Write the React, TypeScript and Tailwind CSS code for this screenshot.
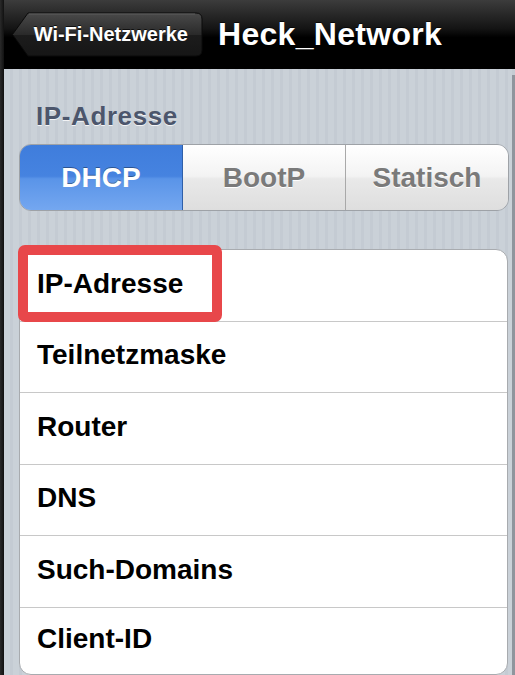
import React from "react";

const rows = ["IP-Adresse", "Teilnetzmaske", "Router", "DNS", "Such-Domains", "Client-ID"];

const segments = ["DHCP", "BootP", "Statisch"];

function BackButton() {
  return (
    <div className="relative w-[191px] h-[45px] flex items-center justify-end pr-[15px]">
      <svg className="absolute inset-0" width="191" height="45" viewBox="0 0 191 45">
        <defs>
          <linearGradient id="bb" x1="0" y1="0" x2="0" y2="1">
            <stop offset="0" stopColor="#4a4a4a" />
            <stop offset="0.5" stopColor="#2a2a2a" />
            <stop offset="0.52" stopColor="#1c1c1c" />
            <stop offset="1" stopColor="#161616" />
          </linearGradient>
        </defs>
        <path
          d="M0.5 22.5 L16 1 L184 1 Q190 1 190 7 L190 38 Q190 44 184 44 L16 44 Z"
          fill="url(#bb)"
          stroke="#0a0a0a"
          strokeWidth="1"
        />
        <path d="M17 2 L183 2" stroke="#5c5c5c" strokeWidth="1" />
      </svg>
      <span className="relative text-white font-bold text-[20px] leading-none [text-shadow:0_-1px_0_rgba(0,0,0,0.7)]">
        Wi-Fi-Netzwerke
      </span>
    </div>
  );
}

export default function App() {
  return (
    <div className="w-[515px] h-[675px] flex overflow-hidden bg-black font-['Liberation_Sans',Arial,sans-serif]">
      {/* left bezel */}
      <div className="w-[4px] shrink-0 bg-[linear-gradient(90deg,#2a2a2a,#111)]" />

      <div className="flex-1 flex flex-col">
        {/* Nav bar */}
        <div className="h-[69px] shrink-0 flex items-center pl-[8px] gap-[15px] bg-[linear-gradient(#3c3c3c,#141414_42%,#000_55%,#000)] border-b border-black">
          <BackButton />
          <h1 className="text-white font-bold text-[32px] leading-none tracking-[0.3px] [text-shadow:0_-1px_0_rgba(0,0,0,0.7)]">
            Heck_Network
          </h1>
        </div>

        <div className="flex-1 flex">
          {/* Body */}
          <div className="flex-1 pl-[15px] pr-[3px] pt-[32px] bg-[repeating-linear-gradient(90deg,#cad1d8_0px,#cad1d8_6px,#c4cbd3_6px,#c4cbd3_9px)]">
            <p className="pl-[17px] text-[26px] leading-[30px] font-bold tracking-[0.6px] text-[#4c566c] [text-shadow:0_1px_0_rgba(255,255,255,0.8)]">
              IP-Adresse
            </p>

            {/* Segmented control */}
            <div className="mt-[13px] h-[67px] flex rounded-[12px] border border-[#9ea2a7] overflow-hidden">
              {segments.map((s, i) => (
                <div
                  key={s}
                  className={
                    i === 0
                      ? "w-[163px] flex items-center justify-center text-[28px] font-bold text-white bg-[linear-gradient(#3f7ddc,#4683e0_48%,#5a94e8_52%,#74a7f0)] border-r border-[#2f5fa8] [text-shadow:0_-1px_0_rgba(0,0,0,0.35)]"
                      : "flex-1 flex items-center justify-center text-[28px] font-bold text-[#7a7a7a] bg-[linear-gradient(#ffffff,#f3f3f3_48%,#e9e9e9_52%,#dedede)] [text-shadow:0_1px_0_#fff]" +
                        (i === 1 ? " border-r border-[#a9a9a9]" : "")
                  }
                >
                  {s}
                </div>
              ))}
            </div>

            {/* Table */}
            <div className="relative mt-[38px] mr-[1px] bg-white rounded-[12px] border border-[#a8abaf]">
              {rows.map((r, i) => (
                <div
                  key={r}
                  className={
                    "flex items-center pl-[17px] text-[28px] font-bold text-black " +
                    (i < rows.length - 1 ? "h-[71.5px] border-b border-[#c8c8c8]" : "h-[66px]")
                  }
                >
                  <span className="-mt-[3px]">{r}</span>
                </div>
              ))}

              {/* highlight box */}
              <div className="absolute left-[-2px] top-[-5px] w-[204px] h-[77px] rounded-[7px] border-[10px] border-[#e8474a]" />
            </div>
          </div>

          {/* right bezel */}
          <div className="w-[3px] shrink-0 flex flex-col">
            <div className="h-[6px] bg-[#c5ccd3]" />
            <div className="flex-1 bg-[#8f959d]" />
          </div>
        </div>
      </div>
    </div>
  );
}
